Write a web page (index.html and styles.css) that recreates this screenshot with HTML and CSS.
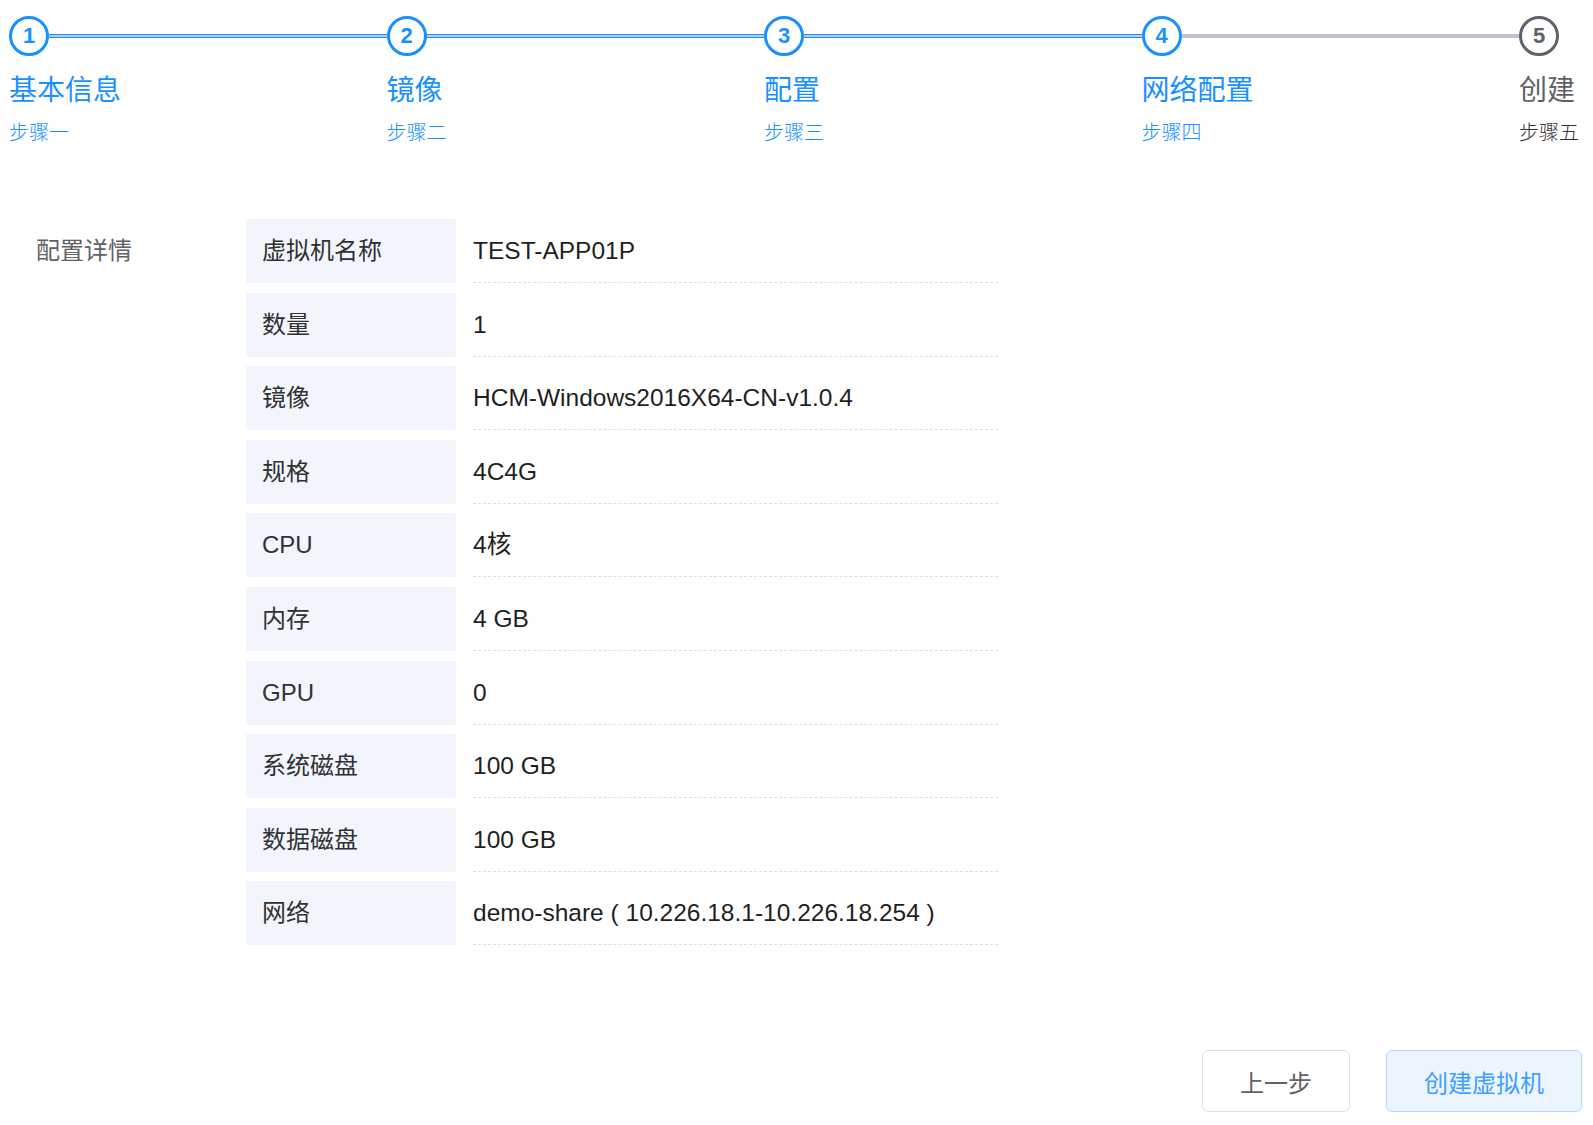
FILE: index.html
```html
<!DOCTYPE html>
<html lang="zh-CN">
<head>
<meta charset="utf-8">
<title>创建虚拟机</title>
<link rel="stylesheet" href="styles.css">
</head>
<body>
<div class="page">
  <div class="steps">
    <div class="step done">
      <div class="step-head"><span class="step-icon">1</span><span class="step-line"><span class="line-inner"></span></span></div>
      <div class="step-title">基本信息</div>
      <div class="step-desc">步骤一</div>
    </div>
    <div class="step done">
      <div class="step-head"><span class="step-icon">2</span><span class="step-line"><span class="line-inner"></span></span></div>
      <div class="step-title">镜像</div>
      <div class="step-desc">步骤二</div>
    </div>
    <div class="step done">
      <div class="step-head"><span class="step-icon">3</span><span class="step-line"><span class="line-inner"></span></span></div>
      <div class="step-title">配置</div>
      <div class="step-desc">步骤三</div>
    </div>
    <div class="step current">
      <div class="step-head"><span class="step-icon">4</span><span class="step-line"></span></div>
      <div class="step-title">网络配置</div>
      <div class="step-desc">步骤四</div>
    </div>
    <div class="step wait last">
      <div class="step-head"><span class="step-icon">5</span></div>
      <div class="step-title">创建</div>
      <div class="step-desc">步骤五</div>
    </div>
  </div>

  <div class="detail">
    <div class="detail-label">配置详情</div>
    <div class="detail-list">
      <div class="row"><div class="cell-k">虚拟机名称</div><div class="cell-v">TEST-APP01P</div></div>
      <div class="row"><div class="cell-k">数量</div><div class="cell-v">1</div></div>
      <div class="row"><div class="cell-k">镜像</div><div class="cell-v">HCM-Windows2016X64-CN-v1.0.4</div></div>
      <div class="row"><div class="cell-k">规格</div><div class="cell-v">4C4G</div></div>
      <div class="row"><div class="cell-k">CPU</div><div class="cell-v">4核</div></div>
      <div class="row"><div class="cell-k">内存</div><div class="cell-v">4 GB</div></div>
      <div class="row"><div class="cell-k">GPU</div><div class="cell-v">0</div></div>
      <div class="row"><div class="cell-k">系统磁盘</div><div class="cell-v">100 GB</div></div>
      <div class="row"><div class="cell-k">数据磁盘</div><div class="cell-v">100 GB</div></div>
      <div class="row"><div class="cell-k">网络</div><div class="cell-v">demo-share ( 10.226.18.1-10.226.18.254 )</div></div>
    </div>
  </div>

  <div class="actions">
    <button class="btn">上一步</button>
    <button class="btn btn-primary">创建虚拟机</button>
  </div>
</div>
</body>
</html>
```

FILE: styles.css
```css
* { box-sizing: border-box; }

html, body {
  margin: 0;
  padding: 0;
  background: #ffffff;
}

body {
  font-family: "Liberation Sans", "Noto Sans CJK SC", sans-serif;
  color: #303133;
}

.page {
  padding: 16px 11px 0 9px;
}

/* Steps */
.steps {
  display: flex;
}

.step {
  flex: 1 1 0;
  min-width: 0;
}

.step.last {
  flex: 0 0 63px;
}

.step-head {
  display: flex;
  align-items: center;
  height: 40px;
}

.step-icon {
  flex: 0 0 40px;
  width: 40px;
  height: 40px;
  border: 3px solid #1890ff;
  border-radius: 50%;
  display: flex;
  align-items: center;
  justify-content: center;
  font-family: "Liberation Sans", sans-serif;
  font-weight: bold;
  font-size: 22px;
  color: #1890ff;
  background: #fff;
}

.step-line {
  flex: 1 1 auto;
  height: 4px;
  background: #c0c4cc;
}

.line-inner {
  display: block;
  height: 4px;
  border-top: 1px solid #1890ff;
  border-bottom: 1px solid #1890ff;
  background: #b9cde4;
}

.step-title {
  margin-top: 15px;
  font-size: 28px;
  line-height: 40px;
  color: #1890ff;
  white-space: nowrap;
}

.step-desc {
  margin-top: 8px;
  font-size: 20px;
  font-weight: 300;
  line-height: 28px;
  color: #1890ff;
  white-space: nowrap;
}

.step.wait .step-icon {
  border-color: #606266;
  color: #606266;
}

.step.wait .step-title {
  color: #606266;
}

.step.wait .step-desc {
  color: #303133;
}

/* Detail */
.detail {
  display: flex;
  margin-top: 72px;
}

.detail-label {
  flex: 0 0 237px;
  padding-left: 27px;
  font-size: 24px;
  line-height: 64px;
  height: 64px;
  color: #606266;
}

.detail-list {
  display: flex;
  flex-direction: column;
  gap: 9.6px;
}

.row {
  display: flex;
  height: 64px;
}

.cell-k {
  flex: 0 0 210px;
  background: #f2f6fc;
  padding-left: 16px;
  font-size: 24px;
  line-height: 64px;
  color: #303133;
}

.cell-v {
  flex: 0 0 525px;
  margin-left: 17px;
  border-bottom: 1px dashed #dcdfe6;
  font-size: 24.5px;
  line-height: 63px;
  color: #1f1f1f;
  white-space: nowrap;
}

/* Actions */
.actions {
  display: flex;
  justify-content: flex-end;
  gap: 36px;
  margin-top: 105px;
}

.btn {
  height: 62px;
  padding: 0 37px;
  border: 1px solid #dcdfe6;
  border-radius: 6px;
  background: #ffffff;
  font-family: "Liberation Sans", "Noto Sans CJK SC", sans-serif;
  font-size: 24px;
  color: #606266;
  cursor: pointer;
}

.btn-primary {
  background: #ecf5ff;
  border-color: #b3d8ff;
  color: #409eff;
}
```
